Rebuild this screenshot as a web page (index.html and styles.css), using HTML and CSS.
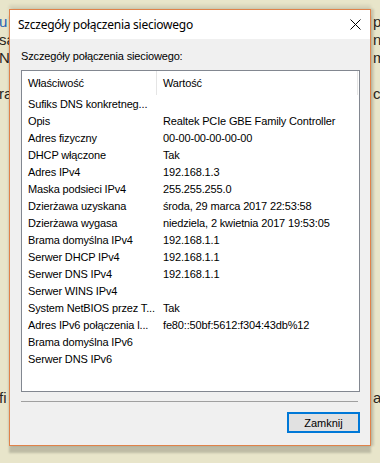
FILE: index.html
```html
<!DOCTYPE html>
<html lang="pl">
<head>
    <meta charset="UTF-8">
    <meta name="viewport" content="width=device-width, initial-scale=1.0">
    <title>Szczegóły połączenia sieciowego</title>
    <link rel="stylesheet" href="styles.css">
</head>
<body>
    <!-- strona w tle, prawie cała zasłonięta przez okno dialogowe -->
    <div class="page">
        <div class="page-line"><span class="frag-l"><span class="link">u</span> l</span><span class="frag-r">pr</span></div>
        <div class="page-line"><span class="frag-l">sa</span><span class="frag-r">na</span></div>
        <div class="page-line"><span class="frag-l">NE</span><span class="frag-r">m</span></div>
        <div class="page-line"></div>
        <div class="page-line"><span class="frag-l">ra</span><span class="frag-r">cu</span></div>
        <div class="page-line page-line-low"><span class="frag-l">fi</span><span class="frag-r">aj</span></div>
    </div>

    <div class="dialog">
        <div class="title-bar">
            <span class="title">Szczegóły połączenia sieciowego</span>
            <svg class="close-icon" width="11" height="11" viewBox="0 0 11 11">
                <path d="M0.5 0.5 L10.5 10.5 M10.5 0.5 L0.5 10.5" stroke="#000" stroke-width="1" fill="none"/>
            </svg>
        </div>

        <div class="dialog-body">
            <div class="caption">Szczegóły połączenia sieciowego:</div>

            <div class="list-view">
                <div class="lv-head">
                    <div class="lv-col">Właściwość</div>
                    <div class="lv-col">Wartość</div>
                </div>
                <div class="lv-rows" id="rows"></div>
            </div>

            <div class="separator"></div>

            <div class="buttons">
                <button class="btn btn-default">Zamknij</button>
            </div>
        </div>
    </div>

    <script>
        // lista właściwości połączenia
        const details = [
            ['Sufiks DNS konkretneg...', ''],
            ['Opis', 'Realtek PCIe GBE Family Controller'],
            ['Adres fizyczny', '00-00-00-00-00-00'],
            ['DHCP włączone', 'Tak'],
            ['Adres IPv4', '192.168.1.3'],
            ['Maska podsieci IPv4', '255.255.255.0'],
            ['Dzierżawa uzyskana', 'środa, 29 marca 2017 22:53:58'],
            ['Dzierżawa wygasa', 'niedziela, 2 kwietnia 2017 19:53:05'],
            ['Brama domyślna IPv4', '192.168.1.1'],
            ['Serwer DHCP IPv4', '192.168.1.1'],
            ['Serwer DNS IPv4', '192.168.1.1'],
            ['Serwer WINS IPv4', ''],
            ['System NetBIOS przez T...', 'Tak'],
            ['Adres IPv6 połączenia l...', 'fe80::50bf:5612:f304:43db%12'],
            ['Brama domyślna IPv6', ''],
            ['Serwer DNS IPv6', '']
        ];

        const rows = document.getElementById('rows');
        details.forEach(([name, value]) => {
            const row = document.createElement('div');
            row.className = 'lv-row';
            const a = document.createElement('div');
            a.className = 'lv-cell';
            a.textContent = name;
            const b = document.createElement('div');
            b.className = 'lv-cell';
            b.textContent = value;
            row.append(a, b);
            rows.appendChild(row);
        });
    </script>
</body>
</html>
```

FILE: styles.css
```css
html, body {
    margin: 0;
}
body {
    width: 380px;
    height: 463px;
    overflow: hidden;
    position: relative;
    background-color: #e8e5ca;
    font-family: "Liberation Sans", Arial, sans-serif;
}

/* tło */
.page {
    padding-top: 13px;
    font-size: 15px;
    line-height: 18px;
    color: #2a2620;
}
.page-line {
    display: flex;
    height: 18px;
    white-space: nowrap;
}
.page-line-low {
    margin-top: 286px;
}
.frag-l {
    margin-left: -1px;
}
.frag-r {
    margin-left: auto;
    width: 7px;
    overflow: hidden;
}
.link {
    color: #1f62b5;
}

/* okno dialogowe */
.dialog {
    position: absolute;
    left: 9px;
    top: 9px;
    width: 360px;
    height: 435px;
    border: 1px solid #e0824a;
    background-color: #f0f0f0;
    box-shadow: 0 7px 2px rgba(0, 0, 0, 0.18), 3px 0 2px rgba(0, 0, 0, 0.12), 0 -4px 3px rgba(0, 0, 0, 0.08);
    display: flex;
    flex-direction: column;
    font-size: 11px;
    letter-spacing: -0.15px;
    color: #000;
}
.title-bar {
    height: 29px;
    flex-shrink: 0;
    background-color: #fff;
    display: flex;
    align-items: center;
    justify-content: space-between;
    padding: 0 9px 0 8px;
}
.title {
    font-family: "Noto Sans", sans-serif;
    font-size: 12px;
    letter-spacing: -0.25px;
    padding-bottom: 1px;
}
.close-icon {
    display: block;
    margin-bottom: 1px;
}
.dialog-body {
    flex: 1;
    display: flex;
    flex-direction: column;
    padding: 11px 10px 0 11px;
}
.caption {
    line-height: 13px;
}
.list-view {
    margin-top: 7px;
    height: 322px;
    box-sizing: border-box;
    border: 1px solid #828790;
    background-color: #fff;
}
.lv-head {
    display: grid;
    grid-template-columns: 135px 201px;
    height: 24px;
}
.lv-col {
    border-right: 1px solid #e5e5e5;
    padding-left: 6px;
    line-height: 24px;
}
.lv-rows {
    padding-top: 1px;
}
.lv-row {
    display: grid;
    grid-template-columns: 135px 1fr;
    height: 17px;
    line-height: 17px;
}
.lv-cell {
    padding-left: 6px;
    white-space: nowrap;
    overflow: hidden;
}
.separator {
    margin: 9px 2px 0 0;
    border-top: 1px solid #a0a0a0;
}
.buttons {
    display: flex;
    justify-content: flex-end;
    margin-top: 10px;
}
.btn {
    width: 73px;
    height: 21px;
    padding: 0;
    font-family: "Liberation Sans", Arial, sans-serif;
    font-size: 11px;
    color: #000;
    background-color: #e1e1e1;
    border: 1px solid #adadad;
}
.btn-default {
    border: 2px solid #0078d7;
}
```
